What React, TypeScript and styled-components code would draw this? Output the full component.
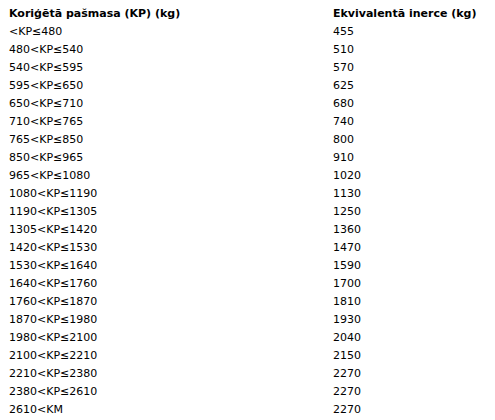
import React from "react";
import styled, { createGlobalStyle } from "styled-components";

const Global = createGlobalStyle`
  html, body { margin: 0; padding: 0; background: #ffffff; }
  body { font-family: Verdana, "DejaVu Sans", sans-serif; font-size: 11px; color: #000; }
`;

const Table = styled.div`
  display: grid;
  grid-template-columns: 324px 1fr;
  grid-auto-rows: 18px;
  padding: 5px 0 0 9px;
`;

const Cell = styled.div<{ $head?: boolean }>`
  line-height: 18px;
  white-space: nowrap;
  font-weight: ${(p) => (p.$head ? 700 : 400)};
`;

const rows: [string, string][] = [
  ["<KP≤480", "455"],
  ["480<KP≤540", "510"],
  ["540<KP≤595", "570"],
  ["595<KP≤650", "625"],
  ["650<KP≤710", "680"],
  ["710<KP≤765", "740"],
  ["765<KP≤850", "800"],
  ["850<KP≤965", "910"],
  ["965<KP≤1080", "1020"],
  ["1080<KP≤1190", "1130"],
  ["1190<KP≤1305", "1250"],
  ["1305<KP≤1420", "1360"],
  ["1420<KP≤1530", "1470"],
  ["1530<KP≤1640", "1590"],
  ["1640<KP≤1760", "1700"],
  ["1760<KP≤1870", "1810"],
  ["1870<KP≤1980", "1930"],
  ["1980<KP≤2100", "2040"],
  ["2100<KP≤2210", "2150"],
  ["2210<KP≤2380", "2270"],
  ["2380<KP≤2610", "2270"],
  ["2610<KM", "2270"],
];

export default function App() {
  return (
    <>
      <Global />
      <Table>
        <Cell $head>Koriģētā pašmasa (KP) (kg)</Cell>
        <Cell $head>Ekvivalentā inerce (kg)</Cell>
        {rows.map(([a, b], i) => (
          <React.Fragment key={i}>
            <Cell>{a}</Cell>
            <Cell>{b}</Cell>
          </React.Fragment>
        ))}
      </Table>
    </>
  );
}
